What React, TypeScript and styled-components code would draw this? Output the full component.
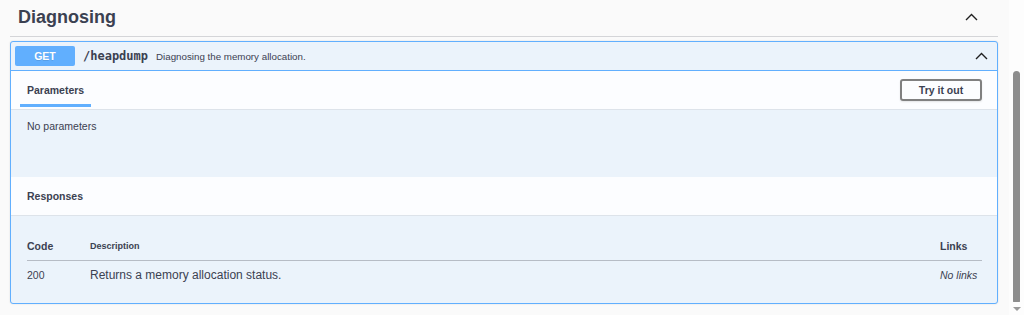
import React from 'react';
import styled, { createGlobalStyle } from 'styled-components';

const GlobalStyle = createGlobalStyle`
  html, body {
    margin: 0;
    padding: 0;
    background: #fafafa;
    overflow: hidden;
  }
  * {
    box-sizing: border-box;
  }
`;

const SANS = `"Liberation Sans", Arial, Helvetica, sans-serif`;
const MONO = `"DejaVu Sans Mono", "Liberation Mono", monospace`;
const INK = '#3b4151';
const BLUE = '#61affe';

function Chevron() {
  return (
    <svg width="13" height="8" viewBox="0 0 13 8">
      <polyline points="1,7 6.5,1.5 12,7" fill="none" stroke="#1f1f1f" strokeWidth="1.4" />
    </svg>
  );
}

interface Response {
  code: string;
  description: string;
}

const responses: Response[] = [
  { code: '200', description: 'Returns a memory allocation status.' },
];

function App() {
  return (
    <>
      <GlobalStyle />
      <Page>
        <Main>
          <TagHeader>
            <TagTitle>Diagnosing</TagTitle>
            <Chevron />
          </TagHeader>

          <OpBlock>
            <Summary>
              <Method>GET</Method>
              <Path>/heapdump</Path>
              <SummaryText>Diagnosing the memory allocation.</SummaryText>
              <SummaryArrow>
                <Chevron />
              </SummaryArrow>
            </Summary>

            <SectionHeader>
              <Tab>Parameters</Tab>
              <TryButton>Try it out</TryButton>
            </SectionHeader>
            <ParamsBody>No parameters</ParamsBody>

            <SectionHeader>
              <SectionTitle>Responses</SectionTitle>
            </SectionHeader>
            <ResponsesBody>
              <ResponsesTable>
                <HeadCell>Code</HeadCell>
                <HeadCell small>Description</HeadCell>
                <HeadCell>Links</HeadCell>
                {responses.map((r) => (
                  <React.Fragment key={r.code}>
                    <Cell>{r.code}</Cell>
                    <DescCell>{r.description}</DescCell>
                    <LinksCell>No links</LinksCell>
                  </React.Fragment>
                ))}
              </ResponsesTable>
            </ResponsesBody>
          </OpBlock>
        </Main>

        <ScrollTrack>
          <Thumb />
          <ScrollArrow />
        </ScrollTrack>
      </Page>
    </>
  );
}

const Page = styled.div`
  display: flex;
  height: 315px;
  font-family: ${SANS};
  color: ${INK};
`;

const Main = styled.div`
  flex: 1;
  padding: 0 11px 0 10px;
`;

const TagHeader = styled.div`
  display: flex;
  align-items: center;
  justify-content: space-between;
  height: 37px;
  padding: 0 20px 2px 8px;
  border-bottom: 1px solid #d4d5d8;
`;

const TagTitle = styled.h3`
  margin: 0;
  font-size: 18px;
  font-weight: 700;
  color: ${INK};
`;

const OpBlock = styled.div`
  margin-top: 4px;
  border: 1px solid ${BLUE};
  border-radius: 3px;
  background: #ebf3fb;
  box-shadow: 0 0 2px rgba(0, 0, 0, 0.12);
  overflow: hidden;
`;

const Summary = styled.div`
  display: flex;
  align-items: center;
  height: 29px;
  padding: 0 9px 0 4px;
  border-bottom: 1px solid ${BLUE};
`;

const Method = styled.span`
  display: flex;
  align-items: center;
  justify-content: center;
  width: 60px;
  height: 20px;
  border-radius: 2px;
  background: ${BLUE};
  color: #fff;
  font-size: 10.5px;
  font-weight: 700;
  text-shadow: 0 1px 0 rgba(0, 0, 0, 0.1);
`;

const Path = styled.span`
  margin: 0 8px;
  font-family: ${MONO};
  font-size: 12px;
  font-weight: 600;
  color: ${INK};
`;

const SummaryText = styled.span`
  flex: 1;
  font-size: 9.75px;
  color: ${INK};
`;

const SummaryArrow = styled.span`
  display: flex;
  align-items: center;
`;

const SectionHeader = styled.div`
  display: flex;
  align-items: center;
  justify-content: space-between;
  height: 39px;
  padding: 0 15px 0 9px;
  background: rgba(255, 255, 255, 0.82);
  border-bottom: 1px solid #dde3ea;
`;

const Tab = styled.span`
  align-self: stretch;
  display: flex;
  align-items: center;
  padding: 5px 7px 0;
  margin-bottom: 2px;
  border-bottom: 3px solid ${BLUE};
  font-size: 10.5px;
  font-weight: 700;
`;

const SectionTitle = styled.span`
  padding-left: 7px;
  font-size: 10.5px;
  font-weight: 700;
`;

const TryButton = styled.button`
  width: 82px;
  height: 22px;
  border: 2px solid #808080;
  border-radius: 3px;
  background: transparent;
  box-shadow: 0 1px 2px rgba(0, 0, 0, 0.1);
  font-family: ${SANS};
  font-size: 10.5px;
  font-weight: 700;
  color: ${INK};
  padding: 0;
`;

const ParamsBody = styled.div`
  height: 67px;
  padding: 10px 16px;
  font-size: 10.5px;
`;

const ResponsesBody = styled.div`
  padding: 15px 15px 15px 16px;
`;

const ResponsesTable = styled.div`
  display: grid;
  grid-template-columns: 63px 1fr 42px;
`;

const HeadCell = styled.div<{ small?: boolean }>`
  display: flex;
  align-items: center;
  height: 30px;
  border-bottom: 1px solid #b6bcc5;
  font-size: ${(p) => (p.small ? '9px' : '10.5px')};
  font-weight: 700;
`;

const Cell = styled.div`
  display: flex;
  align-items: center;
  height: 27px;
  font-size: 10.5px;
`;

const DescCell = styled(Cell)`
  font-size: 12px;
`;

const LinksCell = styled(Cell)`
  font-style: italic;
`;

const ScrollTrack = styled.div`
  width: 15px;
  display: flex;
  flex-direction: column;
  align-items: center;
  padding-top: 71px;
  background: #fdfdfd;
`;

const Thumb = styled.div`
  width: 7px;
  height: 231px;
  border-radius: 4px 4px 1px 1px;
  background: #8d8d8d;
`;

const ScrollArrow = styled.div`
  margin-top: 5px;
  width: 0;
  height: 0;
  border-left: 4px solid transparent;
  border-right: 4px solid transparent;
  border-top: 4px solid #9a9a9a;
`;

export default App;
